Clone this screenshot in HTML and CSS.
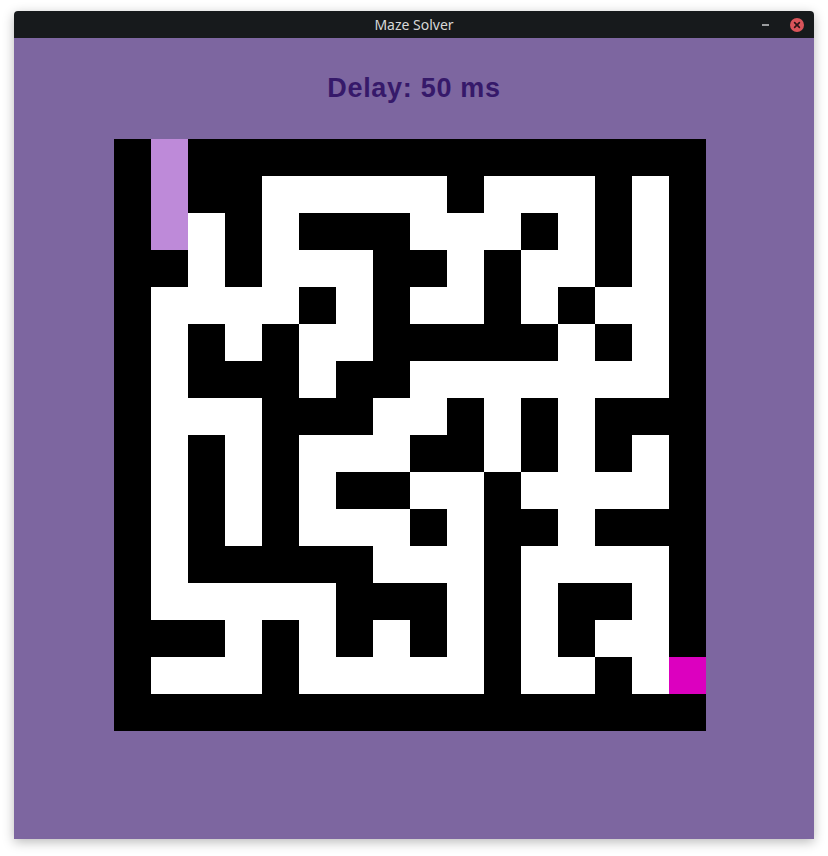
FILE: index.html
```html
<!DOCTYPE html>
<html>
<head>
<meta charset="utf-8">
<title>Maze Solver</title>
<link rel="stylesheet" href="styles.css">
</head>
<body>
<div class="window">
  <div class="titlebar">
    <span class="title">Maze Solver</span>
    <div class="controls">
      <span class="min"></span>
      <span class="close">
        <svg width="14" height="14" viewBox="0 0 14 14"><path d="M4.6 4.6 L9.4 9.4 M9.4 4.6 L4.6 9.4" stroke="#2a1416" stroke-width="1.6" stroke-linecap="round"/></svg>
      </span>
    </div>
  </div>
  <div class="content">
    <h1 class="delay">Delay: 50 ms</h1>
    <div class="maze">
      <i></i><i class="s"></i><i></i><i></i><i></i><i></i><i></i><i></i><i></i><i></i><i></i><i></i><i></i><i></i><i></i><i></i>
      <i></i><i class="s"></i><i></i><i></i><i class="w"></i><i class="w"></i><i class="w"></i><i class="w"></i><i class="w"></i><i></i><i class="w"></i><i class="w"></i><i class="w"></i><i></i><i class="w"></i><i></i>
      <i></i><i class="s"></i><i class="w"></i><i></i><i class="w"></i><i></i><i></i><i></i><i class="w"></i><i class="w"></i><i class="w"></i><i></i><i class="w"></i><i></i><i class="w"></i><i></i>
      <i></i><i></i><i class="w"></i><i></i><i class="w"></i><i class="w"></i><i class="w"></i><i></i><i></i><i class="w"></i><i></i><i class="w"></i><i class="w"></i><i></i><i class="w"></i><i></i>
      <i></i><i class="w"></i><i class="w"></i><i class="w"></i><i class="w"></i><i></i><i class="w"></i><i></i><i class="w"></i><i class="w"></i><i></i><i class="w"></i><i></i><i class="w"></i><i class="w"></i><i></i>
      <i></i><i class="w"></i><i></i><i class="w"></i><i></i><i class="w"></i><i class="w"></i><i></i><i></i><i></i><i></i><i></i><i class="w"></i><i></i><i class="w"></i><i></i>
      <i></i><i class="w"></i><i></i><i></i><i></i><i class="w"></i><i></i><i></i><i class="w"></i><i class="w"></i><i class="w"></i><i class="w"></i><i class="w"></i><i class="w"></i><i class="w"></i><i></i>
      <i></i><i class="w"></i><i class="w"></i><i class="w"></i><i></i><i></i><i></i><i class="w"></i><i class="w"></i><i></i><i class="w"></i><i></i><i class="w"></i><i></i><i></i><i></i>
      <i></i><i class="w"></i><i></i><i class="w"></i><i></i><i class="w"></i><i class="w"></i><i class="w"></i><i></i><i></i><i class="w"></i><i></i><i class="w"></i><i></i><i class="w"></i><i></i>
      <i></i><i class="w"></i><i></i><i class="w"></i><i></i><i class="w"></i><i></i><i></i><i class="w"></i><i class="w"></i><i></i><i class="w"></i><i class="w"></i><i class="w"></i><i class="w"></i><i></i>
      <i></i><i class="w"></i><i></i><i class="w"></i><i></i><i class="w"></i><i class="w"></i><i class="w"></i><i></i><i class="w"></i><i></i><i></i><i class="w"></i><i></i><i></i><i></i>
      <i></i><i class="w"></i><i></i><i></i><i></i><i></i><i></i><i class="w"></i><i class="w"></i><i class="w"></i><i></i><i class="w"></i><i class="w"></i><i class="w"></i><i class="w"></i><i></i>
      <i></i><i class="w"></i><i class="w"></i><i class="w"></i><i class="w"></i><i class="w"></i><i></i><i></i><i></i><i class="w"></i><i></i><i class="w"></i><i></i><i></i><i class="w"></i><i></i>
      <i></i><i></i><i></i><i class="w"></i><i></i><i class="w"></i><i></i><i class="w"></i><i></i><i class="w"></i><i></i><i class="w"></i><i></i><i class="w"></i><i class="w"></i><i></i>
      <i></i><i class="w"></i><i class="w"></i><i class="w"></i><i></i><i class="w"></i><i class="w"></i><i class="w"></i><i class="w"></i><i class="w"></i><i></i><i class="w"></i><i class="w"></i><i></i><i class="w"></i><i class="e"></i>
      <i></i><i></i><i></i><i></i><i></i><i></i><i></i><i></i><i></i><i></i><i></i><i></i><i></i><i></i><i></i><i></i>
    </div>
  </div>
</div>
</body>
</html>
```

FILE: styles.css
```css
html, body {
  margin: 0;
  padding: 0;
  background: #ffffff;
}
body {
  width: 828px;
  height: 856px;
  padding: 11px 0 0 14px;
  box-sizing: border-box;
}
.window {
  width: 800px;
  height: 828px;
  display: flex;
  flex-direction: column;
  box-shadow: 0 3px 12px rgba(0, 0, 0, 0.28);
  border-radius: 4px 4px 0 0;
  overflow: hidden;
}
.titlebar {
  height: 27px;
  flex: none;
  background: #171a1c;
  display: flex;
  align-items: center;
  justify-content: center;
  position: relative;
}
.title {
  font-family: "Noto Sans", "DejaVu Sans", sans-serif;
  font-size: 14px;
  color: #d8d8d8;
  line-height: 27px;
}
.controls {
  position: absolute;
  right: 10px;
  top: 0;
  height: 27px;
  display: flex;
  align-items: center;
  gap: 21px;
}
.min {
  width: 7px;
  height: 2px;
  background: #9a9c9e;
  margin-top: 1px;
}
.close {
  width: 14px;
  height: 14px;
  border-radius: 50%;
  background: #d9545a;
  display: flex;
}
.content {
  flex: 1;
  background: #7d66a0;
  display: flex;
  flex-direction: column;
  align-items: flex-start;
}
.delay {
  align-self: stretch;
  margin: 34px 0 0 0;
  text-align: center;
  font-family: "Liberation Sans", Arial, sans-serif;
  font-weight: bold;
  font-size: 27px;
  letter-spacing: 0.7px;
  line-height: 32px;
  color: #36196a;
}
.maze {
  margin: 35px 0 0 100px;
  display: grid;
  grid-template-columns: repeat(16, 37px);
  grid-template-rows: repeat(16, 37px);
  background: #000000;
}
.maze i {
  display: block;
}
.maze .w {
  background: #ffffff;
}
.maze .s {
  background: #be8ad9;
}
.maze .e {
  background: #dc00bf;
}
```
